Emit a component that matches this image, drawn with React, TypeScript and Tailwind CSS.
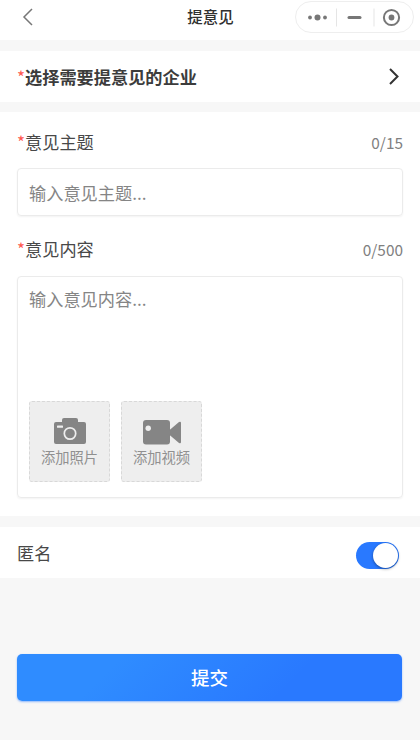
import { useState } from 'react';
import type { ReactNode } from 'react';

interface FieldLabelProps {
  text: string;
  count: string;
}

function Required() {
  return <span className="w-2 shrink-0 font-normal text-[#ff5a50]">*</span>;
}

function FieldLabel({ text, count }: FieldLabelProps) {
  return (
    <div className="flex h-6 items-center justify-between">
      <label className="flex text-[17.2px] leading-6 text-[#484848]"><Required />{text}</label>
      <span className="text-[15.4px] leading-6 text-[#808080]">{count}</span>
    </div>
  );
}

function UploadTile({ label, children }: { label: string; children: ReactNode }) {
  return (
    <button type="button" className="flex h-[81px] w-[81px] flex-col items-center rounded-[3px] border border-dashed border-[#d8d8d8] bg-[#eeeeee] pt-[15px]">
      {children}
      <span className="mt-0.5 whitespace-nowrap text-[14.3px] leading-5 text-[#909090]">{label}</span>
    </button>
  );
}

function CameraIcon() {
  return (
    <svg width="34" height="28" viewBox="0 0 34 28">
      <path fill="#858585" d="M3 5h6V3q0-2 2-2h12q2 0 2 2v2h6q2 0 2 2v18q0 2-2 2H3q-2 0-2-2V7q0-2 2-2Z" />
      <rect x="4" y="8.5" width="6" height="2.3" rx="0.6" fill="#eeeeee" />
      <circle cx="17" cy="16.5" r="5.7" fill="none" stroke="#eeeeee" strokeWidth="1.7" />
    </svg>
  );
}

function VideoIcon() {
  return (
    <svg width="40" height="28" viewBox="0 0 40 28">
      <rect x="1" y="3" width="27" height="24.5" rx="3" fill="#858585" />
      <path fill="#858585" d="M27 13.5 37 5q2-1 2 1v19q0 2-2 1l-10-8.5Z" />
      <circle cx="6.2" cy="11.2" r="2.7" fill="#eeeeee" />
    </svg>
  );
}

function Header() {
  return (
    <header className="relative flex h-10 items-start justify-center bg-white">
      <button type="button" className="absolute left-[22px] top-2">
        <svg width="12" height="18" viewBox="0 0 12 18" fill="none" stroke="#777777" strokeWidth="1.5">
          <path d="m10 1-8 8 8 8" />
        </svg>
      </button>
      <h1 className="pt-1 pl-px text-[15.5px] leading-6 font-medium text-[#303030]">提意见</h1>
      <div className="absolute top-px left-[295px] flex h-8 w-[119px] items-center rounded-full border border-[#eeeeee] bg-white">
        <svg width="117" height="30" viewBox="0 0 117 30" fill="#777777">
          <circle cx="14" cy="15.5" r="1.9" />
          <circle cx="21.5" cy="15.5" r="3" />
          <circle cx="29" cy="15.5" r="1.9" />
          <path d="M40.5 6.5v18M78 6.5v18" stroke="#e5e5e5" />
          <rect x="51.5" y="14" width="14" height="3" rx="1.5" />
          <circle cx="95.5" cy="15.5" r="7.6" fill="none" stroke="#777777" strokeWidth="2" />
          <circle cx="95.5" cy="15.5" r="2.9" />
        </svg>
      </div>
    </header>
  );
}

export default function App() {
  const [topic, setTopic] = useState('');
  const [content, setContent] = useState('');
  const [anonymous, setAnonymous] = useState(true);

  return (
    <div className="h-[740px] w-[420px] overflow-hidden bg-[#f7f7f7] font-['Noto_Sans_CJK_SC',sans-serif]">
      <Header />

      <section className="mt-[11px] flex h-[51px] items-center justify-between bg-white pr-5 pl-[17px]">
        <span className="flex text-[17.2px] leading-6 font-bold text-[#3c3c3c]"><Required />选择需要提意见的企业</span>
        <svg width="12" height="18" viewBox="0 0 12 18" fill="none" stroke="#333333" strokeWidth="2">
          <path d="m2 1 7.5 7.5L2 16" />
        </svg>
      </section>

      <section className="mt-2.5 h-[404px] bg-white px-[17px] pt-[18px]">
        <FieldLabel text="意见主题" count={`${topic.length}/15`} />
        <input
          value={topic}
          maxLength={15}
          onChange={(e) => setTopic(e.target.value)}
          placeholder="输入意见主题..."
          className="mt-3.5 block h-12 w-full rounded-[4px] border border-[#ebebeb] px-[11px] text-[17.2px] text-[#3c3c3c] shadow-[0_1px_2px_rgba(0,0,0,0.05)] outline-none placeholder:text-[#858585]"
        />
        <div className="mt-[21px]">
          <FieldLabel text="意见内容" count={`${content.length}/500`} />
        </div>
        <div className="mt-[15px] h-[222px] rounded-[4px] border border-[#ebebeb] px-[11px] pt-2.5 shadow-[0_1px_2px_rgba(0,0,0,0.05)]">
          <textarea
            value={content}
            maxLength={500}
            onChange={(e) => setContent(e.target.value)}
            placeholder="输入意见内容..."
            className="block h-[114px] w-full resize-none text-[17.2px] leading-6 text-[#3c3c3c] outline-none placeholder:text-[#858585]"
          />
          <div className="flex gap-[11px]">
            <UploadTile label="添加照片"><CameraIcon /></UploadTile>
            <UploadTile label="添加视频"><VideoIcon /></UploadTile>
          </div>
        </div>
      </section>

      <section className="mt-[11px] flex h-[51px] items-center justify-between bg-white pr-[21px] pl-[17px]">
        <span className="text-[17.2px] leading-6 text-[#484848]">匿名</span>
        <button
          type="button"
          role="switch"
          aria-checked={anonymous}
          onClick={() => setAnonymous(!anonymous)}
          className={`mt-1.5 flex h-[27px] w-[43px] items-center rounded-full px-px ${anonymous ? 'justify-end bg-[#2979ff]' : 'justify-start bg-gray-300'}`}
        >
          <span className="h-[25px] w-[25px] rounded-full bg-white shadow-[0_1px_3px_rgba(0,0,0,0.4)]" />
        </button>
      </section>

      <div className="pt-[76px] pr-[18px] pl-[17px]">
        <button type="button" className="h-[47px] w-full rounded-[5px] bg-[linear-gradient(135deg,#2f8cff_25%,#2979ff_70%)] text-[18.5px] font-medium text-white shadow-[0_1px_2px_rgba(41,121,255,0.5)]">提交</button>
      </div>
    </div>
  );
}
